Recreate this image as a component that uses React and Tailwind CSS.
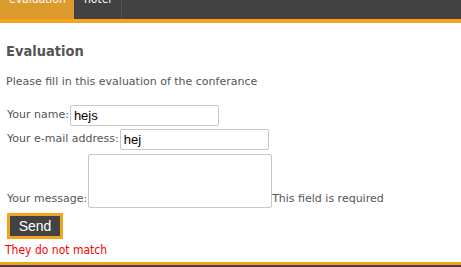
export default function App() {
  const font = { fontFamily: '"DejaVu Sans", Verdana, sans-serif' };
  const cond = { fontFamily: '"DejaVu Sans Condensed", "DejaVu Sans", sans-serif' };
  const arial = { fontFamily: '"Liberation Sans", Arial, sans-serif' };
  return (
    <div className="w-[461px] h-[267px] bg-white flex flex-col overflow-hidden" style={font}>
      <nav className="h-[23px] shrink-0 bg-[#424242] border-b-4 border-[#f5a21f] flex" style={cond}>
        <div className="w-[74px] h-full bg-[#dd9a2c] text-white text-[12px] leading-[13px] pl-[9px] overflow-hidden">
          <div className="-mt-[7px]">evaluation</div>
        </div>
        <div className="w-[48px] h-full border-r border-[#555] text-white text-[12px] leading-[13px] pl-[10px] overflow-hidden">
          <div className="-mt-[7px]">hotel</div>
        </div>
      </nav>

      <main className="flex-1 px-[6px] text-[#555] text-[11px]">
        <h1 className="mt-[19px] text-[14.5px] font-bold leading-[18px]" style={cond}>Evaluation</h1>
        <p className="mt-[15px] leading-[14px]">Please fill in this evaluation of the conferance</p>

        <form className="mt-[16px] pl-[1px]" onSubmit={(e) => e.preventDefault()}>
          <div className="flex items-center">
            <label>Your name:</label>
            <input
              defaultValue="hejs"
              className="ml-[1px] w-[149px] h-[21px] border border-[#c8c8c8] rounded-[2px] px-[3px] text-[13px] text-black"
              style={arial}
            />
          </div>
          <div className="flex items-center mt-[3px]">
            <label>Your e-mail address:</label>
            <input
              defaultValue="hej"
              className="ml-[1px] w-[149px] h-[21px] border border-[#c8c8c8] rounded-[2px] px-[3px] text-[13px] text-black"
              style={arial}
            />
          </div>
          <div className="flex items-end mt-[4px]">
            <label className="mb-[1px]">Your message:</label>
            <textarea className="ml-[1px] w-[184px] h-[54px] border border-[#c8c8c8] rounded-[2px] resize-none" />
            <span className="mb-[1px]">This field is required</span>
          </div>
          <button
            type="submit"
            className="mt-[5px] w-[56px] h-[26px] border-[3px] border-[#f5a21f] bg-[#424242] text-white text-[14px] leading-none"
            style={arial}
          >
            Send
          </button>
        </form>
        <div className="text-[#f00] text-[12px] leading-[14px] mt-[4px] -ml-[1px]" style={cond}>They do not match</div>
      </main>

      <div className="h-[5px] shrink-0 bg-[#424242] border-t-[3px] border-[#f5a21f]" />
    </div>
  );
}
